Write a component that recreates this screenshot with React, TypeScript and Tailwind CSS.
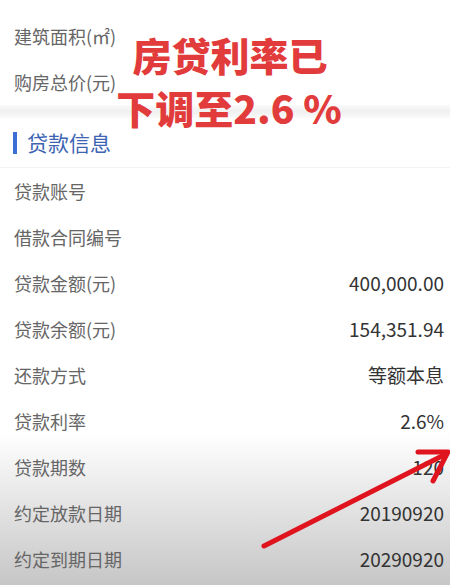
import * as React from "react";

const topRows = [
  { label: "建筑面积(㎡)", value: "" },
  { label: "购房总价(元)", value: "" },
];

const loanRows = [
  { label: "贷款账号", value: "" },
  { label: "借款合同编号", value: "" },
  { label: "贷款金额(元)", value: "400,000.00" },
  { label: "贷款余额(元)", value: "154,351.94" },
  { label: "还款方式", value: "等额本息" },
  { label: "贷款利率", value: "2.6%" },
  { label: "贷款期数", value: "120" },
  { label: "约定放款日期", value: "20190920" },
  { label: "约定到期日期", value: "20290920" },
];

function Row({ label, value }: { label: string; value: string }) {
  return (
    <div className="flex h-[46px] items-center justify-between pl-[14px] pr-[6px] text-[18px]">
      <span className="text-[#666]">{label}</span>
      <span className="text-[19px] text-[#333]">{value}</span>
    </div>
  );
}

export default function App() {
  return (
    <div className="relative h-[585px] w-[450px] overflow-hidden bg-[linear-gradient(to_bottom,#ffffff_0%,#ffffff_74%,#c6c6c6_100%)] font-['Noto_Sans_CJK_SC','Noto_Sans',sans-serif]">
      <div className="pt-[13px]">
        {topRows.map((r) => (
          <Row key={r.label} {...r} />
        ))}
        <div className="h-[13px] bg-[linear-gradient(to_bottom,#fafafa,#f0f0f0,#fafafa)]" />
        <div className="flex h-[50px] items-center gap-[10px] border-b border-[#f3f3f3] pl-[13px]">
          <span className="h-[22px] w-[4px] bg-[#3b6fd6]" />
          <span className="text-[21px] text-[#3d64b3]">贷款信息</span>
        </div>
        {loanRows.map((r) => (
          <Row key={r.label} {...r} />
        ))}
      </div>

      <div className="absolute left-[117px] top-[28px] w-[226px] text-center text-[39px] font-black leading-[53px] text-[#e23b3b]">
        <div>房贷利率已</div>
        <div className="-ml-[2px] whitespace-nowrap">下调至2.6 %</div>
      </div>

      <svg
        className="absolute left-0 top-0"
        width="450"
        height="585"
        viewBox="0 0 450 585"
        fill="none"
      >
        <g stroke="#e0141e" strokeWidth="5" strokeLinecap="round" strokeLinejoin="round">
          <path d="M264 546 L446 454" />
          <path d="M418 452 L448 452 L433 481" />
        </g>
      </svg>
    </div>
  );
}
